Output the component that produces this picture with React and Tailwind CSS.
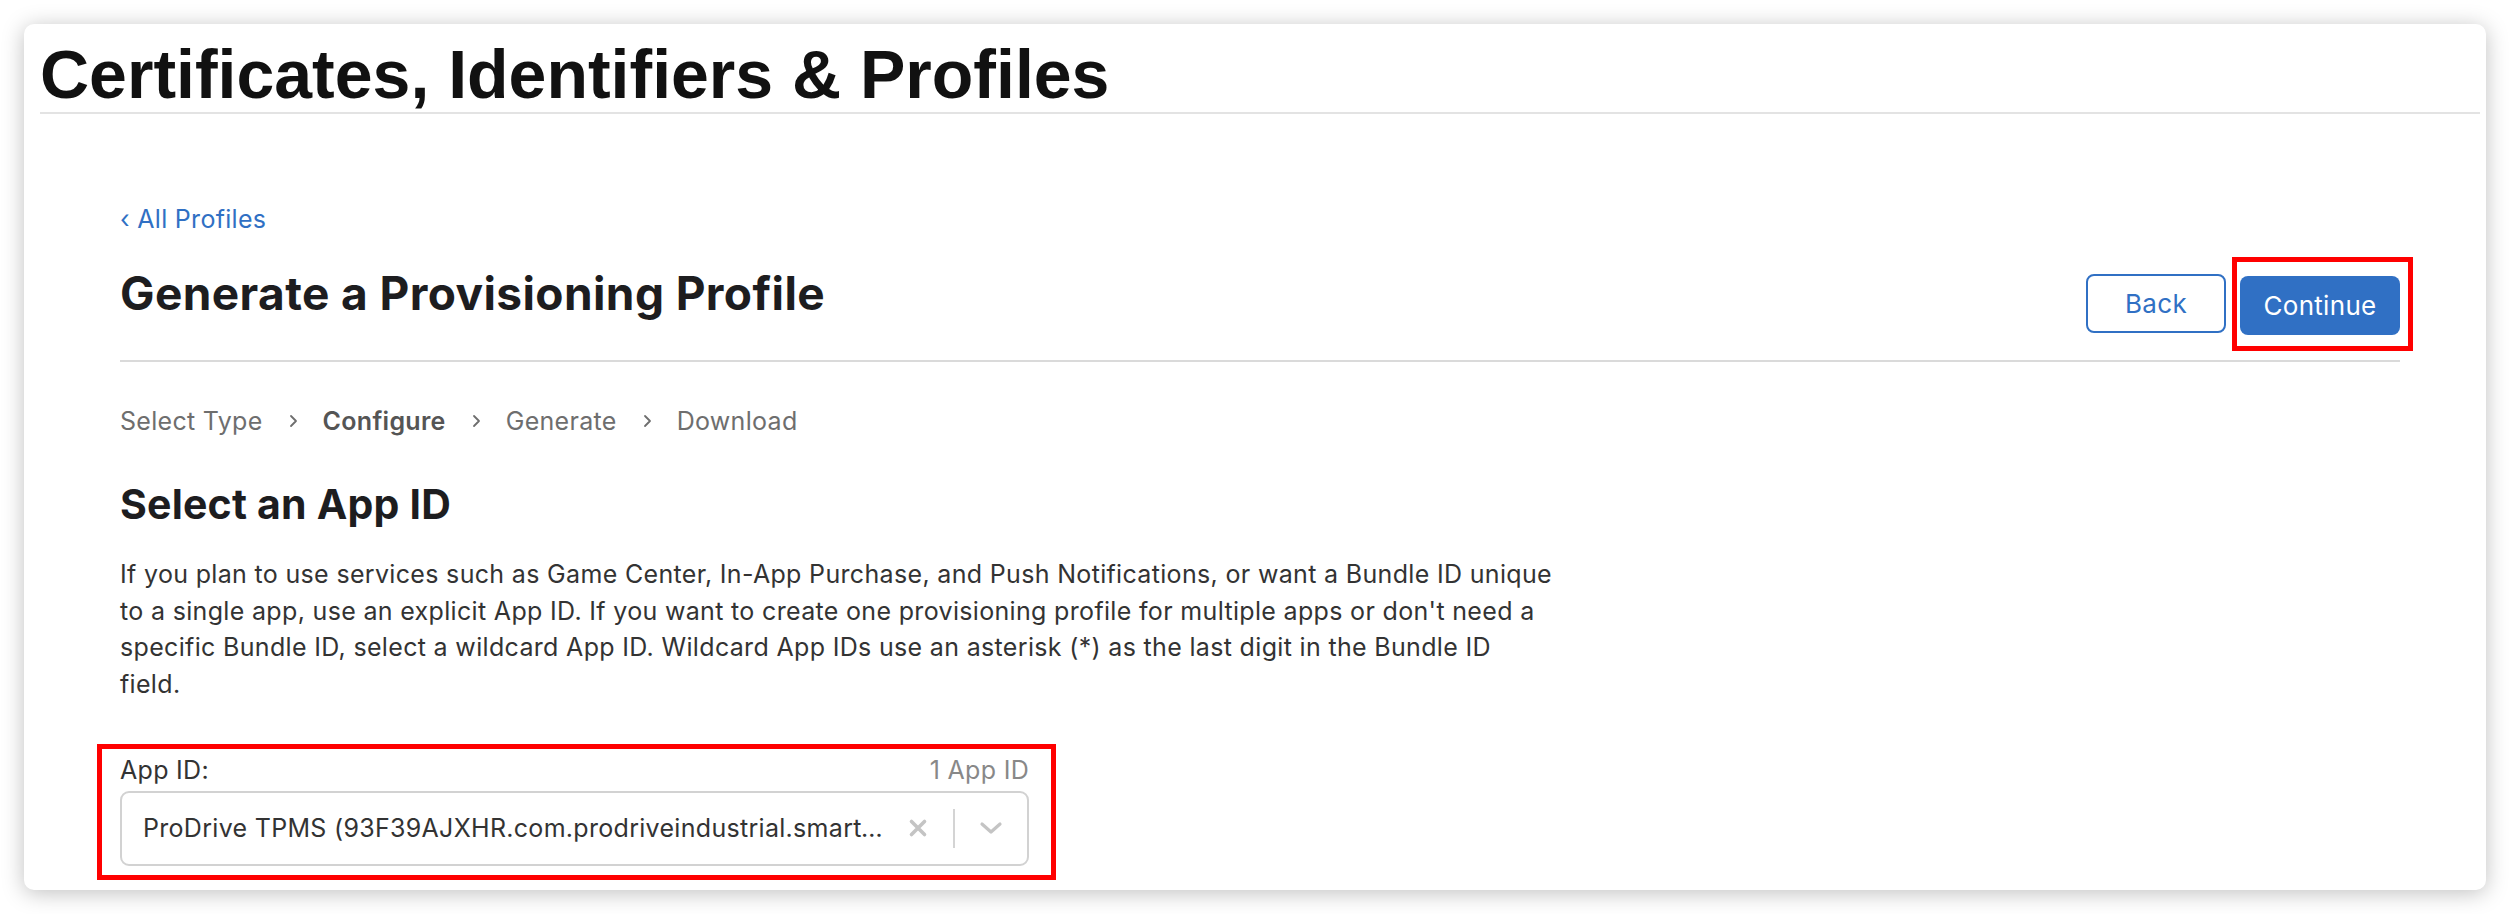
import React from "react"

function Chevron({ className }) {
  return (
    <svg viewBox="0 0 10 16" className={className} fill="none" stroke="currentColor" strokeWidth="1.8" strokeLinecap="round" strokeLinejoin="round">
      <path d="M3 3l5 5-5 5" />
    </svg>
  )
}

function Breadcrumb() {
  const steps = ["Select Type", "Configure", "Generate", "Download"]
  return (
    <div className="flex items-center text-[25px] leading-[30px] tracking-[0.3px] text-[#6e6e6e]">
      {steps.map((s, i) => (
        <React.Fragment key={s}>
          {i > 0 && <Chevron className="mx-[25px] h-[16px] w-[10px] text-[#6e6e6e]" />}
          <span className={s === "Configure" ? "font-semibold text-[#555]" : ""}>{s}</span>
        </React.Fragment>
      ))}
    </div>
  )
}

function AppIdSelect() {
  return (
    <div className="-ml-[23px] -mr-[27px] mt-[41px] w-[959px] border-[5px] border-[#ff0000] pb-[9px] pl-[18px] pr-[22px] pt-[6px]">
      <div className="flex items-center justify-between text-[25px] leading-[30px] tracking-[0.3px]">
        <span className="text-[#333]">App ID:</span>
        <span className="text-[#888]">1 App ID</span>
      </div>
      <div className="mt-[6px] flex h-[75px] items-center rounded-[9px] border-2 border-[#d2d2d2] pl-[21px]">
        <span className="w-[740px] truncate text-[25px] tracking-[0.3px] text-[#333]">
          ProDrive TPMS (93F39AJXHR.com.prodriveindustrial.smarttpms)
        </span>
        <div className="ml-auto flex h-full items-center">
          <svg viewBox="0 0 20 20" className="mr-[25px] h-[20px] w-[20px] text-[#c4c4c4]" fill="none" stroke="currentColor" strokeWidth="3.6" strokeLinecap="round">
            <path d="M3.5 3.5l13 13M16.5 3.5l-13 13" />
          </svg>
          <div className="h-[39px] w-[2px] bg-[#d4d4d4]" />
          <svg viewBox="0 0 24 14" className="mx-[24px] h-[14px] w-[24px] text-[#c4c4c4]" fill="none" stroke="currentColor" strokeWidth="3.2" strokeLinecap="round" strokeLinejoin="round">
            <path d="M3 3l9 8 9-8" />
          </svg>
        </div>
      </div>
    </div>
  )
}

export default function App() {
  return (
    <div className="h-[914px] w-[2510px] overflow-hidden bg-white pl-[24px] pt-[24px] font-['Inter',sans-serif]">
      <div className="h-[866px] w-[2462px] overflow-hidden rounded-[10px] bg-white shadow-[0_3px_22px_rgba(0,0,0,0.25)]">
        <div className="pl-[16px] pr-[6px] pt-[16px]">
          <h1 className="h-[68px] font-['Liberation_Sans',Arial,sans-serif] text-[68px] font-bold leading-[68px] text-[#111]">
            Certificates, Identifiers &amp; Profiles
          </h1>
          <div className="mt-[4px] h-[2px] bg-[#e3e3e3]" />
        </div>

        <div className="ml-[96px] w-[2280px]">
          <div className="flex items-start justify-between">
            <div className="pt-[90px]">
              <a className="block text-[25px] leading-[30px] tracking-[0.3px] text-[#3070c4]">‹ All Profiles</a>
              <h2 className="mt-[33px] text-[46px] font-bold leading-[52px] tracking-[0.4px] text-[#1d1d1f]">
                Generate a Provisioning Profile
              </h2>
            </div>
            <div className="mt-[160px] flex items-center gap-[14px]">
              <button className="h-[59px] w-[140px] rounded-[8px] border-2 border-[#3070c4] text-[26px] tracking-[0.3px] text-[#3070c4]">
                Back
              </button>
              <div className="-my-[19px] -ml-[8px] -mr-[13px] border-[5px] border-[#ff0000] pb-[11px] pl-[3px] pr-[8px] pt-[14px]">
                <button className="h-[59px] w-[160px] rounded-[8px] bg-[#3070c4] text-[26px] tracking-[0.3px] text-white">
                  Continue
                </button>
              </div>
            </div>
          </div>

          <div className="mt-[27px] h-[2px] bg-[#dadada]" />

          <div className="mt-[44px]">
            <Breadcrumb />
          </div>

          <h3 className="mt-[44px] text-[41px] font-bold leading-[48px] tracking-[0.2px] text-[#1d1d1f]">Select an App ID</h3>

          <p className="mt-[28px] w-[1450px] text-[25px] leading-[36.7px] tracking-[0.33px] text-[#333]">
            If you plan to use services such as Game Center, In-App Purchase, and Push Notifications, or want a Bundle ID unique to a single app, use an explicit App ID. If you want to create one provisioning profile for multiple apps or don't need a specific Bundle ID, select a wildcard App ID. Wildcard App IDs use an asterisk (*) as the last digit in the Bundle ID
            <br />
            field.
          </p>

          <AppIdSelect />
        </div>
      </div>
    </div>
  )
}
